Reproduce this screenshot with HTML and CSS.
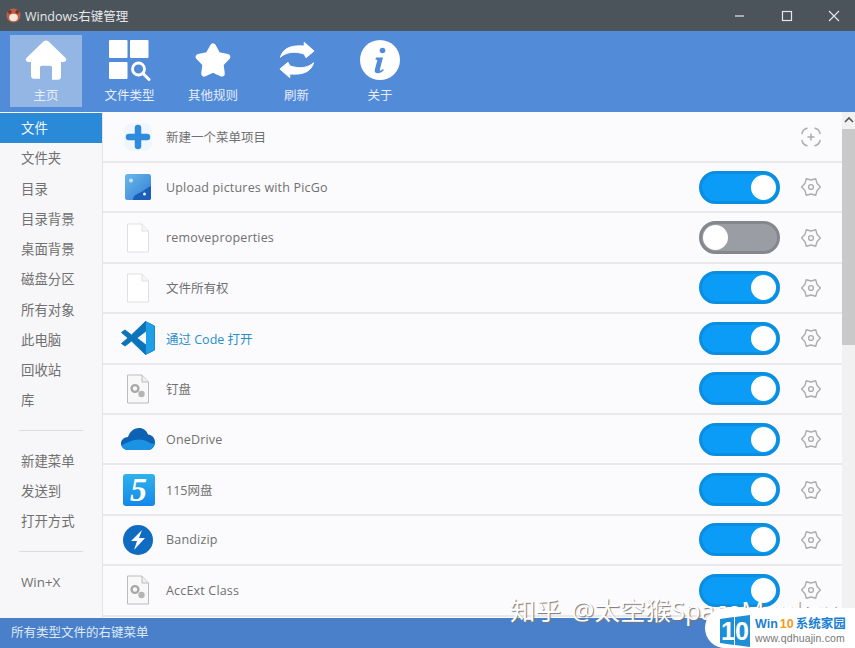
FILE: index.html
```html
<!DOCTYPE html>
<html lang="zh-CN">
<head>
    <meta charset="UTF-8">
    <meta name="viewport" content="width=device-width, initial-scale=1.0">
    <title>Windows右键管理</title>
    <link rel="stylesheet" href="styles.css">
</head>
<body>
    <svg class="defs" width="0" height="0">
        <defs>
            <symbol id="gear" viewBox="0 0 20 20">
                <path d="M19.400 10L16.100 13.500 14.700 18.200 10 17 5.300 18.200 3.900 13.500 .6 10 3.900 6.500 5.300 1.800 10 3 14.700 1.800 16.100 6.500z" fill="none" stroke="#adadad" stroke-width="1.400" stroke-linejoin="round"/>
                <circle cx="10" cy="10" r="2.400" fill="none" stroke="#adadad" stroke-width="1.400"/>
            </symbol>
            <symbol id="page" viewBox="0 0 24 30">
                <path d="M1.500 1h14.500l6.500 7v21h-21z" fill="#fff" stroke="#e0e0e0" stroke-width="1"/>
                <path d="M16 1v7h6.500" fill="#f5f5f5" stroke="#e0e0e0" stroke-width="1"/>
            </symbol>
            <symbol id="gearfile" viewBox="0 0 24 30">
                <path d="M1.500 1h14.500l6.500 7v21h-21z" fill="#f8f8f8" stroke="#bcbcbc" stroke-width="1"/>
                <path d="M16 1v7h6.500" fill="#eee" stroke="#bcbcbc" stroke-width="1"/>
                <circle cx="9" cy="14.500" r="3.400" fill="none" stroke="#a8a8a8" stroke-width="2.400"/>
                <circle cx="15.500" cy="20" r="3.200" fill="#b4b4b4"/>
            </symbol>
        </defs>
    </svg>

    <div class="window">
        <header class="titlebar">
            <svg class="app-icon" viewBox="0 0 16 16" width="15" height="15">
                <circle cx="8" cy="8" r="7.500" fill="#bf5f4a"/>
                <circle cx="4" cy="4" r="2" fill="#7a3427"/>
                <circle cx="12" cy="4" r="2" fill="#7a3427"/>
                <ellipse cx="8" cy="10" rx="4.600" ry="4" fill="#f6e6dc"/>
            </svg>
            <span class="app-title">Windows右键管理</span>
            <div class="win-controls">
                <svg viewBox="0 0 12 12" width="12" height="12"><path d="M1 6h9" stroke="#e4e6e8" stroke-width="1.200"/></svg>
                <svg viewBox="0 0 12 12" width="12" height="12"><rect x="1.500" y="1.500" width="9" height="9" fill="none" stroke="#e4e6e8" stroke-width="1.200"/></svg>
                <svg viewBox="0 0 12 12" width="12" height="12"><path d="M1 1l10 10M11 1L1 11" stroke="#e4e6e8" stroke-width="1.200"/></svg>
            </div>
        </header>

        <nav class="toolbar">
            <a class="tool active">
                <svg viewBox="0 0 44 42" width="44" height="42">
                    <path d="M22 1.500c1 0 1.800.4 2.600 1.100l16.800 16.200c1.700 1.700.6 4.200-1.700 4.200H37v15c0 1.600-1.200 2.800-2.800 2.800H28V28.500c0-1-.7-1.700-1.700-1.700h-8.600c-1 0-1.700.7-1.700 1.700v11.300H9.800C8.200 39.800 7 38.600 7 37V23H4.300c-2.300 0-3.400-2.500-1.700-4.200L19.400 2.600c.8-.7 1.600-1.100 2.600-1.100z" fill="#fff"/>
                </svg>
                <span>主页</span>
            </a>
            <a class="tool">
                <svg viewBox="0 0 44 42" width="44" height="42">
                    <rect x="1" y="1" width="18.500" height="18" rx="1" fill="#fff"/>
                    <rect x="22" y="1" width="18.500" height="18" rx="1" fill="#fff"/>
                    <rect x="1" y="23" width="18.500" height="17" rx="1" fill="#fff"/>
                    <circle cx="30.500" cy="30" r="6" fill="none" stroke="#fff" stroke-width="2.800"/>
                    <path d="M35 34.500l6 6" stroke="#fff" stroke-width="3" stroke-linecap="round"/>
                </svg>
                <span>文件类型</span>
            </a>
            <a class="tool">
                <svg viewBox="0 0 44 42" width="44" height="42">
                    <path d="M22 7.500L26.700 16 36.300 17.900 29.600 25 30.800 34.600 22 30.500 13.200 34.600 14.400 25 7.700 17.900 17.300 16z" fill="#fff" stroke="#fff" stroke-width="6" stroke-linejoin="round"/>
                </svg>
                <span>其他规则</span>
            </a>
            <a class="tool">
                <svg viewBox="0 0 44 42" width="44" height="42">
                    <g transform="translate(2.200 2.100) scale(.9)">
                        <path d="M3.500 18C6 9 14 4 30 5.500L30 1.300 41 11 32 18.500 30 14.500C20 11 10 12 3.500 18z" fill="#fff" stroke="#fff" stroke-linejoin="round"/>
                        <path d="M3.500 18C6 9 14 4 30 5.500L30 1.300 41 11 32 18.500 30 14.500C20 11 10 12 3.500 18z" fill="#fff" stroke="#fff" stroke-linejoin="round" transform="rotate(180 22 21)"/>
                    </g>
                </svg>
                <span>刷新</span>
            </a>
            <a class="tool">
                <svg viewBox="0 0 44 42" width="44" height="42">
                    <circle cx="22" cy="21" r="20" fill="#fff"/>
                    <circle cx="24.500" cy="11.500" r="2.800" fill="#528bd8"/>
                    <path d="M18 18.500h7l-3.200 12c-.3 1 .5 1.400 1.500.8l2-1.300.5 1.300c-2 2-4 3-6 3-2.500 0-3.600-1.400-3-3.600l2.600-9.700-2-.6z" fill="#528bd8"/>
                </svg>
                <span>关于</span>
            </a>
        </nav>

        <div class="body">
            <aside class="sidebar">
                <div class="side-item active">文件</div>
                <div class="side-item">文件夹</div>
                <div class="side-item">目录</div>
                <div class="side-item">目录背景</div>
                <div class="side-item">桌面背景</div>
                <div class="side-item">磁盘分区</div>
                <div class="side-item">所有对象</div>
                <div class="side-item">此电脑</div>
                <div class="side-item">回收站</div>
                <div class="side-item">库</div>
                <div class="side-sep"></div>
                <div class="side-item">新建菜单</div>
                <div class="side-item">发送到</div>
                <div class="side-item">打开方式</div>
                <div class="side-sep"></div>
                <div class="side-item">Win+X</div>
            </aside>

            <main class="list">
                <div class="row">
                    <div class="row-icon">
                        <svg viewBox="0 0 30 30" width="30" height="30">
                            <rect x="1" y="1" width="28" height="28" rx="8" fill="#f1f6fb"/>
                            <path d="M15 6v18M6 15h18" stroke="#2f8cdc" stroke-width="6.500" stroke-linecap="round"/>
                        </svg>
                    </div>
                    <span class="row-label">新建一个菜单项目</span>
                    <svg class="gear" viewBox="0 0 20 20" width="20" height="20">
                        <path d="M1 6.500C1.500 4 3.500 1.800 6 1.200M14 1.200c2.500.6 4.500 2.800 5 5.300M19 13.500c-.5 2.500-2.500 4.700-5 5.300M6 18.800c-2.500-.6-4.500-2.800-5-5.300" fill="none" stroke="#adadad" stroke-width="1.500" stroke-linecap="round"/>
                        <path d="M10 6.500v7M6.500 10h7" stroke="#adadad" stroke-width="1.500"/>
                    </svg>
                </div>
                <div class="row">
                    <div class="row-icon">
                        <svg viewBox="0 0 26 26" width="26" height="26">
                            <defs><linearGradient id="picgo" x1="0" y1="0" x2="1" y2="1"><stop offset="0" stop-color="#6db8ea"/><stop offset="1" stop-color="#2f7fd4"/></linearGradient></defs>
                            <rect width="26" height="26" rx="2.500" fill="url(#picgo)"/>
                            <path d="M8 26c0-6 6-6 10-9 3-2 5-4 8-5v12a2 2 0 0 1-2 2z" fill="#1c5fb8"/>
                            <circle cx="6" cy="6.500" r="2" fill="#bfe3f8"/>
                            <circle cx="19.500" cy="20" r="1.500" fill="#e8f4fc"/>
                        </svg>
                    </div>
                    <span class="row-label latin">Upload pictures with PicGo</span>
                    <div class="toggle on"><i></i></div>
                    <svg class="gear" width="20" height="20"><use href="#gear"/></svg>
                </div>
                <div class="row">
                    <div class="row-icon"><svg width="24" height="30"><use href="#page"/></svg></div>
                    <span class="row-label latin">removeproperties</span>
                    <div class="toggle"><i></i></div>
                    <svg class="gear" width="20" height="20"><use href="#gear"/></svg>
                </div>
                <div class="row">
                    <div class="row-icon"><svg width="24" height="30"><use href="#page"/></svg></div>
                    <span class="row-label">文件所有权</span>
                    <div class="toggle on"><i></i></div>
                    <svg class="gear" width="20" height="20"><use href="#gear"/></svg>
                </div>
                <div class="row">
                    <div class="row-icon">
                        <svg viewBox="0 0 34 34" width="34" height="34">
                            <path d="M24.500 .5L33.500 5v24l-9 4.500L10.500 20 4 25 .5 22.500 7 17 .5 11.500 4 9l6.500 5z" fill="#0c74ba" stroke="#0c74ba" stroke-linejoin="round"/>
                            <path d="M25 10.500L16.500 17l8.500 6.500z" fill="#fbfbfd"/>
                            <path d="M25 .5L33.500 5v24L25 33.500z" fill="#1f9fe8"/>
                        </svg>
                    </div>
                    <span class="row-label link">通过 Code 打开</span>
                    <div class="toggle on"><i></i></div>
                    <svg class="gear" width="20" height="20"><use href="#gear"/></svg>
                </div>
                <div class="row">
                    <div class="row-icon"><svg width="24" height="30"><use href="#gearfile"/></svg></div>
                    <span class="row-label">钉盘</span>
                    <div class="toggle on"><i></i></div>
                    <svg class="gear" width="20" height="20"><use href="#gear"/></svg>
                </div>
                <div class="row">
                    <div class="row-icon">
                        <svg viewBox="0 0 34 22" width="34" height="22">
                            <path d="M7 22C3 22 0 19 0 15.500S3 9 7 9C8.500 4 12.500 0 18 0c4.500 0 7.500 2.500 9 6.500 4 .2 7 3.500 7 7.500 0 4.500-3 8-7 8z" fill="#0e62b4"/>
                            <path d="M7 22c-3 0-5.500-2-6.500-4.500C5 15 9 13 13 12c6-1.500 11 0 15 2.500 2 1.200 4 1.500 5.800 1-.8 3.500-3.500 6.500-6.800 6.500z" fill="#1a93e2"/>
                        </svg>
                    </div>
                    <span class="row-label latin">OneDrive</span>
                    <div class="toggle on"><i></i></div>
                    <svg class="gear" width="20" height="20"><use href="#gear"/></svg>
                </div>
                <div class="row">
                    <div class="row-icon"><div class="badge-115">5</div></div>
                    <span class="row-label">115网盘</span>
                    <div class="toggle on"><i></i></div>
                    <svg class="gear" width="20" height="20"><use href="#gear"/></svg>
                </div>
                <div class="row">
                    <div class="row-icon">
                        <svg viewBox="0 0 30 30" width="30" height="30">
                            <circle cx="15" cy="15" r="15" fill="#0f6cc0"/>
                            <path d="M19 5L8 16h6l-3 9 11-12h-6z" fill="#fff"/>
                        </svg>
                    </div>
                    <span class="row-label latin">Bandizip</span>
                    <div class="toggle on"><i></i></div>
                    <svg class="gear" width="20" height="20"><use href="#gear"/></svg>
                </div>
                <div class="row">
                    <div class="row-icon"><svg width="24" height="30"><use href="#gearfile"/></svg></div>
                    <span class="row-label latin">AccExt Class</span>
                    <div class="toggle on"><i></i></div>
                    <svg class="gear" width="20" height="20"><use href="#gear"/></svg>
                </div>
            </main>

            <div class="scrollbar">
                <svg viewBox="0 0 10 10" width="10" height="10"><path d="M1 7l4-4 4 4" fill="none" stroke="#555" stroke-width="1.600"/></svg>
                <div class="thumb"></div>
            </div>
        </div>

        <footer class="statusbar">所有类型文件的右键菜单</footer>
    </div>

    <div class="watermark">知乎 @太空猴SpaceMonkey</div>
    <div class="site-badge">
        <svg viewBox="0 0 30 32" width="30" height="32">
            <path d="M0 4l14-2v28L0 28zM15 2l15-2v32l-15-2z" fill="#1c8fd6"/>
            <text x="15" y="25" text-anchor="middle" class="logo-num">10</text>
        </svg>
        <div class="site-text">
            <div class="site-name">Win<b>10</b>系统家园</div>
            <div class="site-url">www.qdhuajin.com</div>
        </div>
    </div>
</body>
</html>
```

FILE: styles.css
```css
* {
    box-sizing: border-box;
}
html, body {
    margin: 0;
    padding: 0;
    height: 100%;
    overflow: hidden;
}
body {
    font-family: 'Open Sans', 'Noto Sans CJK SC', sans-serif;
    color: #5c5c5c;
    background-color: #f8f8fa;
}
.defs {
    display: block;
    height: 0;
}
.window {
    height: 648px;
    display: flex;
    flex-direction: column;
}
.titlebar {
    height: 31px;
    flex: none;
    display: flex;
    align-items: center;
    padding-left: 6px;
    background-color: #4b545b;
    color: #e6e8ea;
}
.app-title {
    margin-left: 4px;
    font-size: 12.5px;
}
.win-controls {
    margin-left: auto;
    display: flex;
    gap: 35px;
    padding-right: 15px;
}
.toolbar {
    height: 81px;
    flex: none;
    display: flex;
    gap: 11.5px;
    padding: 4px 0 0 10px;
    background-color: #528bd8;
}
.tool {
    width: 72px;
    height: 72px;
    display: flex;
    flex-direction: column;
    align-items: center;
    padding-top: 4px;
    color: #e6eef9;
    font-size: 12.5px;
}
.tool span {
    margin-top: 4px;
    white-space: nowrap;
}
.tool.active {
    background-color: #94b6e5;
}
.body {
    flex: 1;
    min-height: 0;
    display: flex;
}
.sidebar {
    width: 103px;
    flex: none;
    padding-top: 1px;
    background-color: #f7f7f9;
    border-right: 1px solid #e4e4e6;
}
.side-item {
    height: 30.25px;
    line-height: 30px;
    padding-left: 21px;
    font-size: 13.4px;
    color: #707070;
}
.side-item.active {
    background-color: #2a8ad8;
    color: #f2f8fd;
}
.side-sep {
    height: 30.25px;
    margin: 0 19px;
    display: flex;
    align-items: center;
}
.side-sep::after {
    content: "";
    flex: 1;
    height: 1px;
    background-color: #dcdcde;
}
.list {
    flex: 1;
    min-width: 0;
    overflow: hidden;
    padding-top: .6px;
    background-color: #fbfbfd;
}
.row {
    height: 50.4px;
    display: flex;
    align-items: center;
    padding-right: 21px;
    border-bottom: 2px solid #e9e9eb;
}
.row-icon {
    width: 63px;
    flex: none;
    display: flex;
    justify-content: center;
    padding-left: 7px;
}
.row-label {
    font-size: 12.5px;
    color: #707070;
}
.row-label.latin {
    letter-spacing: .18px;
}
.row-label.link {
    color: #2a8fc9;
}
.gear {
    flex: none;
    margin-left: 21px;
}
.row > .gear:nth-child(3) {
    margin-left: auto;
}
.toggle {
    width: 81px;
    height: 33px;
    margin-left: auto;
    flex: none;
    display: flex;
    align-items: center;
    padding: 0 3px;
    border: 3px solid #85878e;
    border-radius: 17px;
    background-color: #9b9da4;
}
.toggle i {
    width: 25px;
    height: 25px;
    margin-left: -2px;
    border-radius: 50%;
    background-color: #fff;
}
.toggle.on {
    justify-content: flex-end;
    border-color: #0b8de0;
    background-color: #0a9cf6;
}
.toggle.on i {
    margin: 0 -2px 0 0;
}
.badge-115 {
    width: 32px;
    height: 32px;
    margin-left: 1px;
    border-radius: 3px;
    background: linear-gradient(180deg, #2fb2ec, #1488ea);
    color: #fff;
    font-family: 'Liberation Serif', serif;
    font-size: 34px;
    font-style: italic;
    font-weight: bold;
    line-height: 31px;
    text-align: center;
}
.scrollbar {
    width: 13px;
    flex: none;
    display: flex;
    flex-direction: column;
    align-items: center;
    padding-top: 3px;
    background-color: #f1f1f1;
}
.thumb {
    width: 100%;
    height: 216px;
    margin-top: 4px;
    background-color: #c9c9c9;
}
.statusbar {
    height: 30px;
    flex: none;
    padding-left: 11px;
    line-height: 30px;
    font-size: 12.5px;
    background-color: #4a80c9;
    color: #dfe9f6;
}
/* overlays stamped on the screenshot */
.watermark {
    position: absolute;
    left: 510px;
    top: 590px;
    font-size: 25.5px;
    word-spacing: 4px;
    color: #fff;
    white-space: nowrap;
    text-shadow: 1px 1px 1px #777;
}
.site-badge {
    position: absolute;
    left: 705px;
    top: 608px;
    width: 150px;
    height: 40px;
    display: flex;
    align-items: center;
    gap: 5px;
    padding: 6px 0 0 15px;
    background-color: #fff;
    border-radius: 20px 0 0 20px;
}
.logo-num {
    font-family: 'Liberation Sans', sans-serif;
    font-size: 25px;
    font-weight: bold;
    fill: #fff;
}
.site-name {
    font-family: 'Liberation Sans', 'Noto Sans CJK SC', sans-serif;
    font-size: 12.5px;
    font-weight: bold;
    line-height: 15px;
    color: #1c7fd0;
    white-space: nowrap;
}
.site-name b {
    margin: 0 2px;
    color: #f09a1e;
}
.site-url {
    font-family: 'Liberation Sans', sans-serif;
    font-size: 10.5px;
    line-height: 13px;
    letter-spacing: .15px;
    color: #777;
}
```
